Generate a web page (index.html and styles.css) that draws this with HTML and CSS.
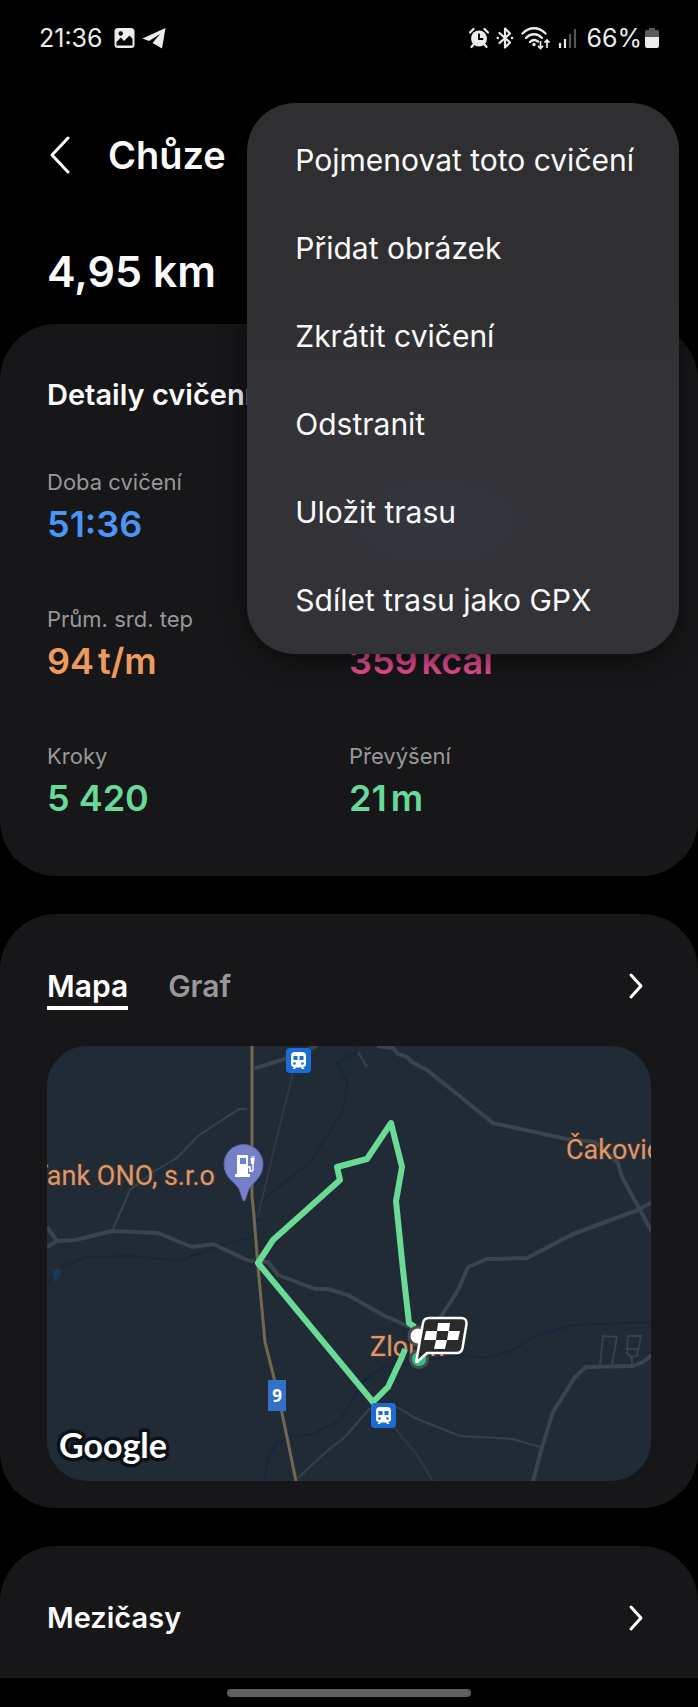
FILE: index.html
```html
<!DOCTYPE html>
<html lang="cs">
<head>
    <meta charset="UTF-8">
    <meta name="viewport" content="width=device-width, initial-scale=1.0">
    <title>Chůze</title>
    <link rel="stylesheet" href="styles.css">
</head>
<body>
    <div class="screen">
        <!-- Status bar -->
        <div class="status-bar">
            <div class="status-group">
                <span class="clock">21:36</span>
                <svg width="21" height="22" viewBox="0 0 21 22">
                    <rect x="0.5" y="1" width="20" height="20" rx="3.5" fill="#ececec"/>
                    <path d="M2.500 18.500V15l4.500-4.500 3 3.500 5.500-5.500 3 3.200v6.800z" fill="#000"/>
                    <circle cx="6.700" cy="6.500" r="2.200" fill="#000"/>
                </svg>
                <svg width="24" height="22" viewBox="0 0 24 22">
                    <path d="M23.500 1 20 21.500 10.500 16l7.500-9-11 7L.500 11.500z" fill="#ececec"/>
                </svg>
            </div>
            <div class="status-group">
                <svg width="20" height="22" viewBox="0 0 20 22">
                    <circle cx="10" cy="11.500" r="8" fill="#ececec"/>
                    <path d="M1 5.500 4.500 2M19 5.500 15.500 2M4.500 17.500 2.500 20M15.500 17.500l2 2.500" stroke="#ececec" stroke-width="2.200" stroke-linecap="round"/>
                    <path d="M10 6.500v5.500h4.200" fill="none" stroke="#000" stroke-width="1.800"/>
                </svg>
                <svg width="18" height="22" viewBox="0 0 18 22">
                    <path d="M3.500 6 14 15.500 9 20.500v-19L14 6.500 3.500 16" fill="none" stroke="#ececec" stroke-width="2.200" stroke-linejoin="round" stroke-linecap="round"/>
                    <circle cx="1.800" cy="11" r="1.300" fill="#ececec"/>
                    <circle cx="16" cy="11" r="1.300" fill="#ececec"/>
                </svg>
                <svg width="30" height="24" viewBox="0 0 30 24">
                    <g fill="none" stroke="#ececec" stroke-width="2.300" stroke-linecap="round">
                        <path d="M1.500 7.500C8 .5 18 .5 24.500 7.500M5 12c4.500-5 11.500-5 16 0M9 16c2.500-2.500 5.500-2.500 8-.5"/>
                    </g>
                    <circle cx="13" cy="18.500" r="1.700" fill="#ececec"/>
                    <path d="M19.500 15v7M17 19.800l2.500 2.700 2.500-2.700M26 22v-7.500M23.500 16.700 26 14l2.500 2.700" fill="none" stroke="#ececec" stroke-width="1.700"/>
                </svg>
                <svg width="19" height="22" viewBox="0 0 19 22">
                    <path d="M2 16v5M7 12v9" stroke="#ececec" stroke-width="2.200"/>
                    <path d="M12 7v14M17 2v19" stroke="#555" stroke-width="2.200"/>
                </svg>
                <span class="battery-level">66%</span>
                <svg width="14" height="22" viewBox="0 0 14 22">
                    <path d="M4 1h6v2h2a2 2 0 0 1 2 2v5H0V5a2 2 0 0 1 2-2h2z" fill="#5a5a5a"/>
                    <path d="M0 10h14v9a2 2 0 0 1-2 2H2a2 2 0 0 1-2-2z" fill="#ececec"/>
                </svg>
            </div>
        </div>

        <header class="header">
            <button class="back" aria-label="Zpět">
                <svg width="22" height="38" viewBox="0 0 22 38">
                    <path d="M19 2 3 19l16 17" fill="none" stroke="#fff" stroke-width="3" stroke-linecap="round" stroke-linejoin="round"/>
                </svg>
            </button>
            <h1>Chůze</h1>
        </header>
        <p class="distance">4,95 km</p>

        <!-- Workout details -->
        <section class="card details">
            <h2>Detaily cvičení</h2>
            <dl class="stats">
                <div class="stat blue">
                    <dt>Doba cvičení</dt>
                    <dd>51:36</dd>
                </div>
                <div class="stat"></div>
                <div class="stat orange">
                    <dt>Prům. srd. tep</dt>
                    <dd>94<span class="unit">t/m</span></dd>
                </div>
                <div class="stat pink">
                    <dd>359<span class="unit">kcal</span></dd>
                </div>
                <div class="stat green">
                    <dt>Kroky</dt>
                    <dd>5 420</dd>
                </div>
                <div class="stat green">
                    <dt>Převýšení</dt>
                    <dd>21<span class="unit">m</span></dd>
                </div>
            </dl>
        </section>

        <!-- Map -->
        <section class="card map-card">
            <div class="card-head">
                <div class="tabs">
                    <button class="tab active">Mapa</button>
                    <button class="tab">Graf</button>
                </div>
                <a class="more" href="#mapa" aria-label="Mapa">
                    <svg width="18" height="28" viewBox="0 0 18 28">
                        <path d="M4 3l10 11L4 25" fill="none" stroke="#fff" stroke-width="3" stroke-linecap="round" stroke-linejoin="round"/>
                    </svg>
                </a>
            </div>
            <svg class="map" id="mapa" viewBox="0 0 604 435" preserveAspectRatio="xMidYMid slice">
                <defs>
                    <g id="train">
                        <rect width="25" height="25" rx="4" fill="#1c6cd6"/>
                        <path d="M9 4h7q4 0 4 4v8q0 3-3 3l1.500 2h-2.500l-1-1.500h-5L9 21H6.500L8 19q-3 0-3-3V8q0-4 4-4z" fill="#fff"/>
                        <path d="M7.500 8h4v4h-4zM13.500 8h4v4h-4z" fill="#1c6cd6"/>
                        <circle cx="8.500" cy="15.500" r="1.300" fill="#1c6cd6"/>
                        <circle cx="16.500" cy="15.500" r="1.300" fill="#1c6cd6"/>
                    </g>
                </defs>
                <rect width="605" height="435" fill="#212b36"/>

                <!-- streams -->
                <g fill="none" stroke="#17263c" stroke-width="2">
                    <path d="M308 0l2 6-20 11 10 20-4 27-31 50-49 40-11 37-40 11-32 13-47-5-48 1-25 11-10 14"/>
                    <path d="M605 276l-79 3-38 11-22 14-26 8-27-3-77 12-18 13-25 40-27 14-23 3-13 6-9 14-4 24"/>
                </g>
                <path d="M6 225l7-3 1 7-7 7-1-5z" fill="#14395b"/>

                <!-- small roads -->
                <g fill="none" stroke="#36414c" stroke-width="2">
                    <path d="M246 27l-16 64-12 50-7 30" stroke="#2e3843"/>
                    <path d="M200 63h-8l-41 27-21 22-24 14-23 18-17 39M311 6l9 15"/>
                    <path d="M350 361l18 11 45 18 53 3 27 8M323 362l-25 29-18 14-29 27"/>
                    <path d="M348 382l22 27 16 26" stroke="#2e3843"/>
                    <path d="M553 319l3-29 14 1-5 28M581 290h13l-4 20-6 1-4-4zM581 303h10M585 311v9"/>
                </g>

                <!-- main roads -->
                <g fill="none" stroke="#3a444f" stroke-width="4" stroke-linejoin="round">
                    <path d="M0 181l10 14M0 201l10-6 18-1 37-9 46 2 34 14 21-3 34 16 10 2 11 0 10 13 37 14h13l20 6 35 20 29 13"/>
                    <path d="M206 23l32-10 32-13"/>
                    <path d="M330 0l16 2 5 6 9 3 5 5 15 8 15 12 51 41 74 16 28 3 23 21 4 14 30 55"/>
                    <path d="M605 156l-14 8-65 24-46 24-40 1-19 8-10 23-18 28"/>
                    <path d="M486 435l9-34 11-35 22-35 11-10 47-1 10-4 9-7"/>
                </g>
                <path d="M205 0v150l2 20 4 51 7 75 9 36 8 35 14 68" fill="none" stroke="#2a2b2d" stroke-width="5"/>
                <path d="M205 0v150l2 20 4 51 7 75 9 36 8 35 14 68" fill="none" stroke="#706956" stroke-width="3"/>

                <g class="place">
                    <text x="168" y="139" text-anchor="end">Tank ONO, s.r.o</text>
                    <text x="519" y="113">Čakovice</text>
                    <text x="323" y="310">Zlonín</text>
                </g>

                <rect x="221" y="334" width="18" height="31" fill="#3370c8"/>
                <text class="road-no" x="230" y="356" text-anchor="middle">9</text>

                <path d="M197 155c-1.500 0-2-4-5-12-3-6-15-11-15-25a19.500 19.500 0 0 1 39 0c0 14-11 19-14 25-3 8-3.500 12-5 12z" fill="#7580c9" stroke="#5561ad"/>
                <path d="M190 109h11v19h2v3h-15v-3h2z" fill="#fff"/>
                <path d="M193 112h6v6h-6z" fill="#7580c9"/>
                <path d="M201 121h2v4q2 1 3-1v-7" fill="none" stroke="#fff" stroke-width="1.500"/>
                <path d="M203.500 112h1v-2h1v2h1v-2h1v3l-.5 5h-3z" fill="#fff"/>
                <use href="#train" x="239" y="2"/>

                <!-- route -->
                <path d="M368 281l-6-4-6-53-7-69 6-34-11-44-24 36-30 8 3 13-67 60-15 23 115 139 15-15 14-30 3-8" fill="none" stroke="#69db95" stroke-width="6" stroke-linejoin="round"/>
                <use href="#train" x="324" y="357"/>

                <circle cx="371" cy="290" r="9" fill="#fff" stroke="#4b4e50" stroke-width="3"/>
                <circle cx="372" cy="313" r="8.500" fill="#32c588" stroke="#4b4e50" stroke-width="3"/>
                <path d="M382 272h32q6 0 5.500 6l-4 24q-1 5-6 5H380l-10 9q-1 0-.5-2l6.500-37q1-5 6-5z" fill="#2b2b2b" stroke="#fff" stroke-width="2.500" stroke-linejoin="round"/>
                <path d="M391 277h12l-1 8h11l-2 9h-11l-2 9h-11l2-9h-12l2-9h11zM390 285l-1 9h11l1.500-9z" fill="#fff" fill-rule="evenodd"/>

                <text class="google" x="12" y="412">Google</text>
            </svg>
        </section>

        <section class="card splits">
            <div class="card-head">
                <h2>Mezičasy</h2>
                <a class="more" href="#mezicasy" aria-label="Mezičasy">
                    <svg width="18" height="28" viewBox="0 0 18 28">
                        <path d="M4 3l10 11L4 25" fill="none" stroke="#fff" stroke-width="3" stroke-linecap="round" stroke-linejoin="round"/>
                    </svg>
                </a>
            </div>
        </section>

        <div class="nav-bar"><span class="nav-handle"></span></div>

        <!-- Options menu -->
        <div class="menu">
            <button class="menu-item">Pojmenovat toto cvičení</button>
            <button class="menu-item">Přidat obrázek</button>
            <button class="menu-item">Zkrátit cvičení</button>
            <button class="menu-item">Odstranit</button>
            <button class="menu-item">Uložit trasu</button>
            <button class="menu-item">Sdílet trasu jako GPX</button>
        </div>
    </div>
</body>
</html>
```
FILE: styles.css
```css
* {
    margin: 0;
    padding: 0;
    box-sizing: border-box;
}

body {
    font-family: 'Inter', 'Roboto', sans-serif;
    background: #000;
    color: #fafafa;
}

button {
    font: inherit;
    color: inherit;
    background: none;
    border: none;
    cursor: pointer;
}

svg {
    display: block;
}

.screen {
    position: relative;
    min-height: 100vh;
    display: flex;
    flex-direction: column;
}

/* Status bar */
.status-bar {
    height: 76px;
    padding: 0 39px;
    display: flex;
    justify-content: space-between;
    align-items: center;
    font-size: 25px;
    color: #ececec;
}

.status-group {
    display: flex;
    align-items: center;
    gap: 7px;
}

.clock {
    margin-right: 4px;
}

.battery-level {
    margin: 0 -4px 0 2px;
}

/* Header */
.header {
    margin-top: 53px;
    padding: 0 49px;
    display: flex;
    align-items: center;
    gap: 37px;
}

.header h1 {
    font-size: 38px;
    line-height: 52px;
    font-weight: 600;
}

.distance {
    margin: 62px 47px 25px;
    font-size: 43px;
    line-height: 56px;
    font-weight: 600;
}

/* Cards */
.card {
    background: #171719;
    border-radius: 56px;
    padding: 52px 47px 0;
    margin-bottom: 38px;
}

.card h2 {
    font-size: 29px;
    line-height: 40px;
    font-weight: 600;
}

.card-head {
    display: flex;
    justify-content: space-between;
    align-items: flex-start;
}

.more {
    padding: 6px;
}

.details {
    padding-top: 51px;
    padding-bottom: 56px;
}

.stats {
    margin-top: 51px;
    display: grid;
    grid-template-columns: 1fr 1fr;
    row-gap: 57px;
}

.stat {
    display: flex;
    flex-direction: column;
    justify-content: flex-end;
    gap: 4px;
}

.stat dt {
    font-size: 22px;
    line-height: 32px;
    color: #98989a;
}

.stat dd {
    font-size: 36px;
    line-height: 44px;
    font-weight: 600;
}

.unit {
    margin-left: 4px;
}

.blue dd {
    color: #4a95f5;
}

.orange dd {
    color: #ec9a5e;
}

.pink dd {
    color: #e34c90;
}

.green dd {
    color: #66d99b;
}

/* Map card */
.map-card {
    padding-bottom: 27px;
}

.tabs {
    display: flex;
    gap: 40px;
}

.tab {
    font-size: 30px;
    line-height: 40px;
    font-weight: 600;
    color: #98989a;
    border-bottom: 4px solid transparent;
}

.tab.active {
    color: #fff;
    border-color: #fff;
}

.map {
    width: 100%;
    margin-top: 36px;
    border-radius: 40px;
}

.place text {
    font-family: 'Roboto', sans-serif;
    font-size: 27px;
    fill: #d79b73;
    stroke: #4b2f22;
    stroke-width: 2px;
    paint-order: stroke;
}

.road-no {
    font-family: 'Open Sans', sans-serif;
    font-size: 17px;
    font-weight: 700;
    fill: #fff;
}

.google {
    font-family: 'Lato', sans-serif;
    font-size: 34px;
    font-weight: 700;
    fill: #fff;
    stroke: #0c1117;
    stroke-width: 7px;
    stroke-linejoin: round;
    paint-order: stroke;
}

.splits {
    flex: 1;
    border-radius: 56px 56px 0 0;
    padding-bottom: 40px;
    margin-bottom: 0;
}

/* Navigation bar */
.nav-bar {
    height: 29px;
    display: flex;
    justify-content: center;
    align-items: center;
}

.nav-handle {
    width: 35%;
    height: 8px;
    border-radius: 4px;
    background: #606060;
}

/* Options menu */
.menu {
    position: absolute;
    top: 103px;
    right: 19px;
    padding: 13px 45px 10px 48px;
    display: flex;
    flex-direction: column;
    border-radius: 48px;
    background: radial-gradient(110px 60px at 44% 76%, rgba(48, 62, 80, 0.3), transparent), linear-gradient(#2f2f32 35%, #333337 50%);
    box-shadow: 0 6px 24px rgba(0, 0, 0, 0.5);
}

.menu-item {
    height: 88px;
    font-size: 30px;
    text-align: left;
    white-space: nowrap;
}
```
